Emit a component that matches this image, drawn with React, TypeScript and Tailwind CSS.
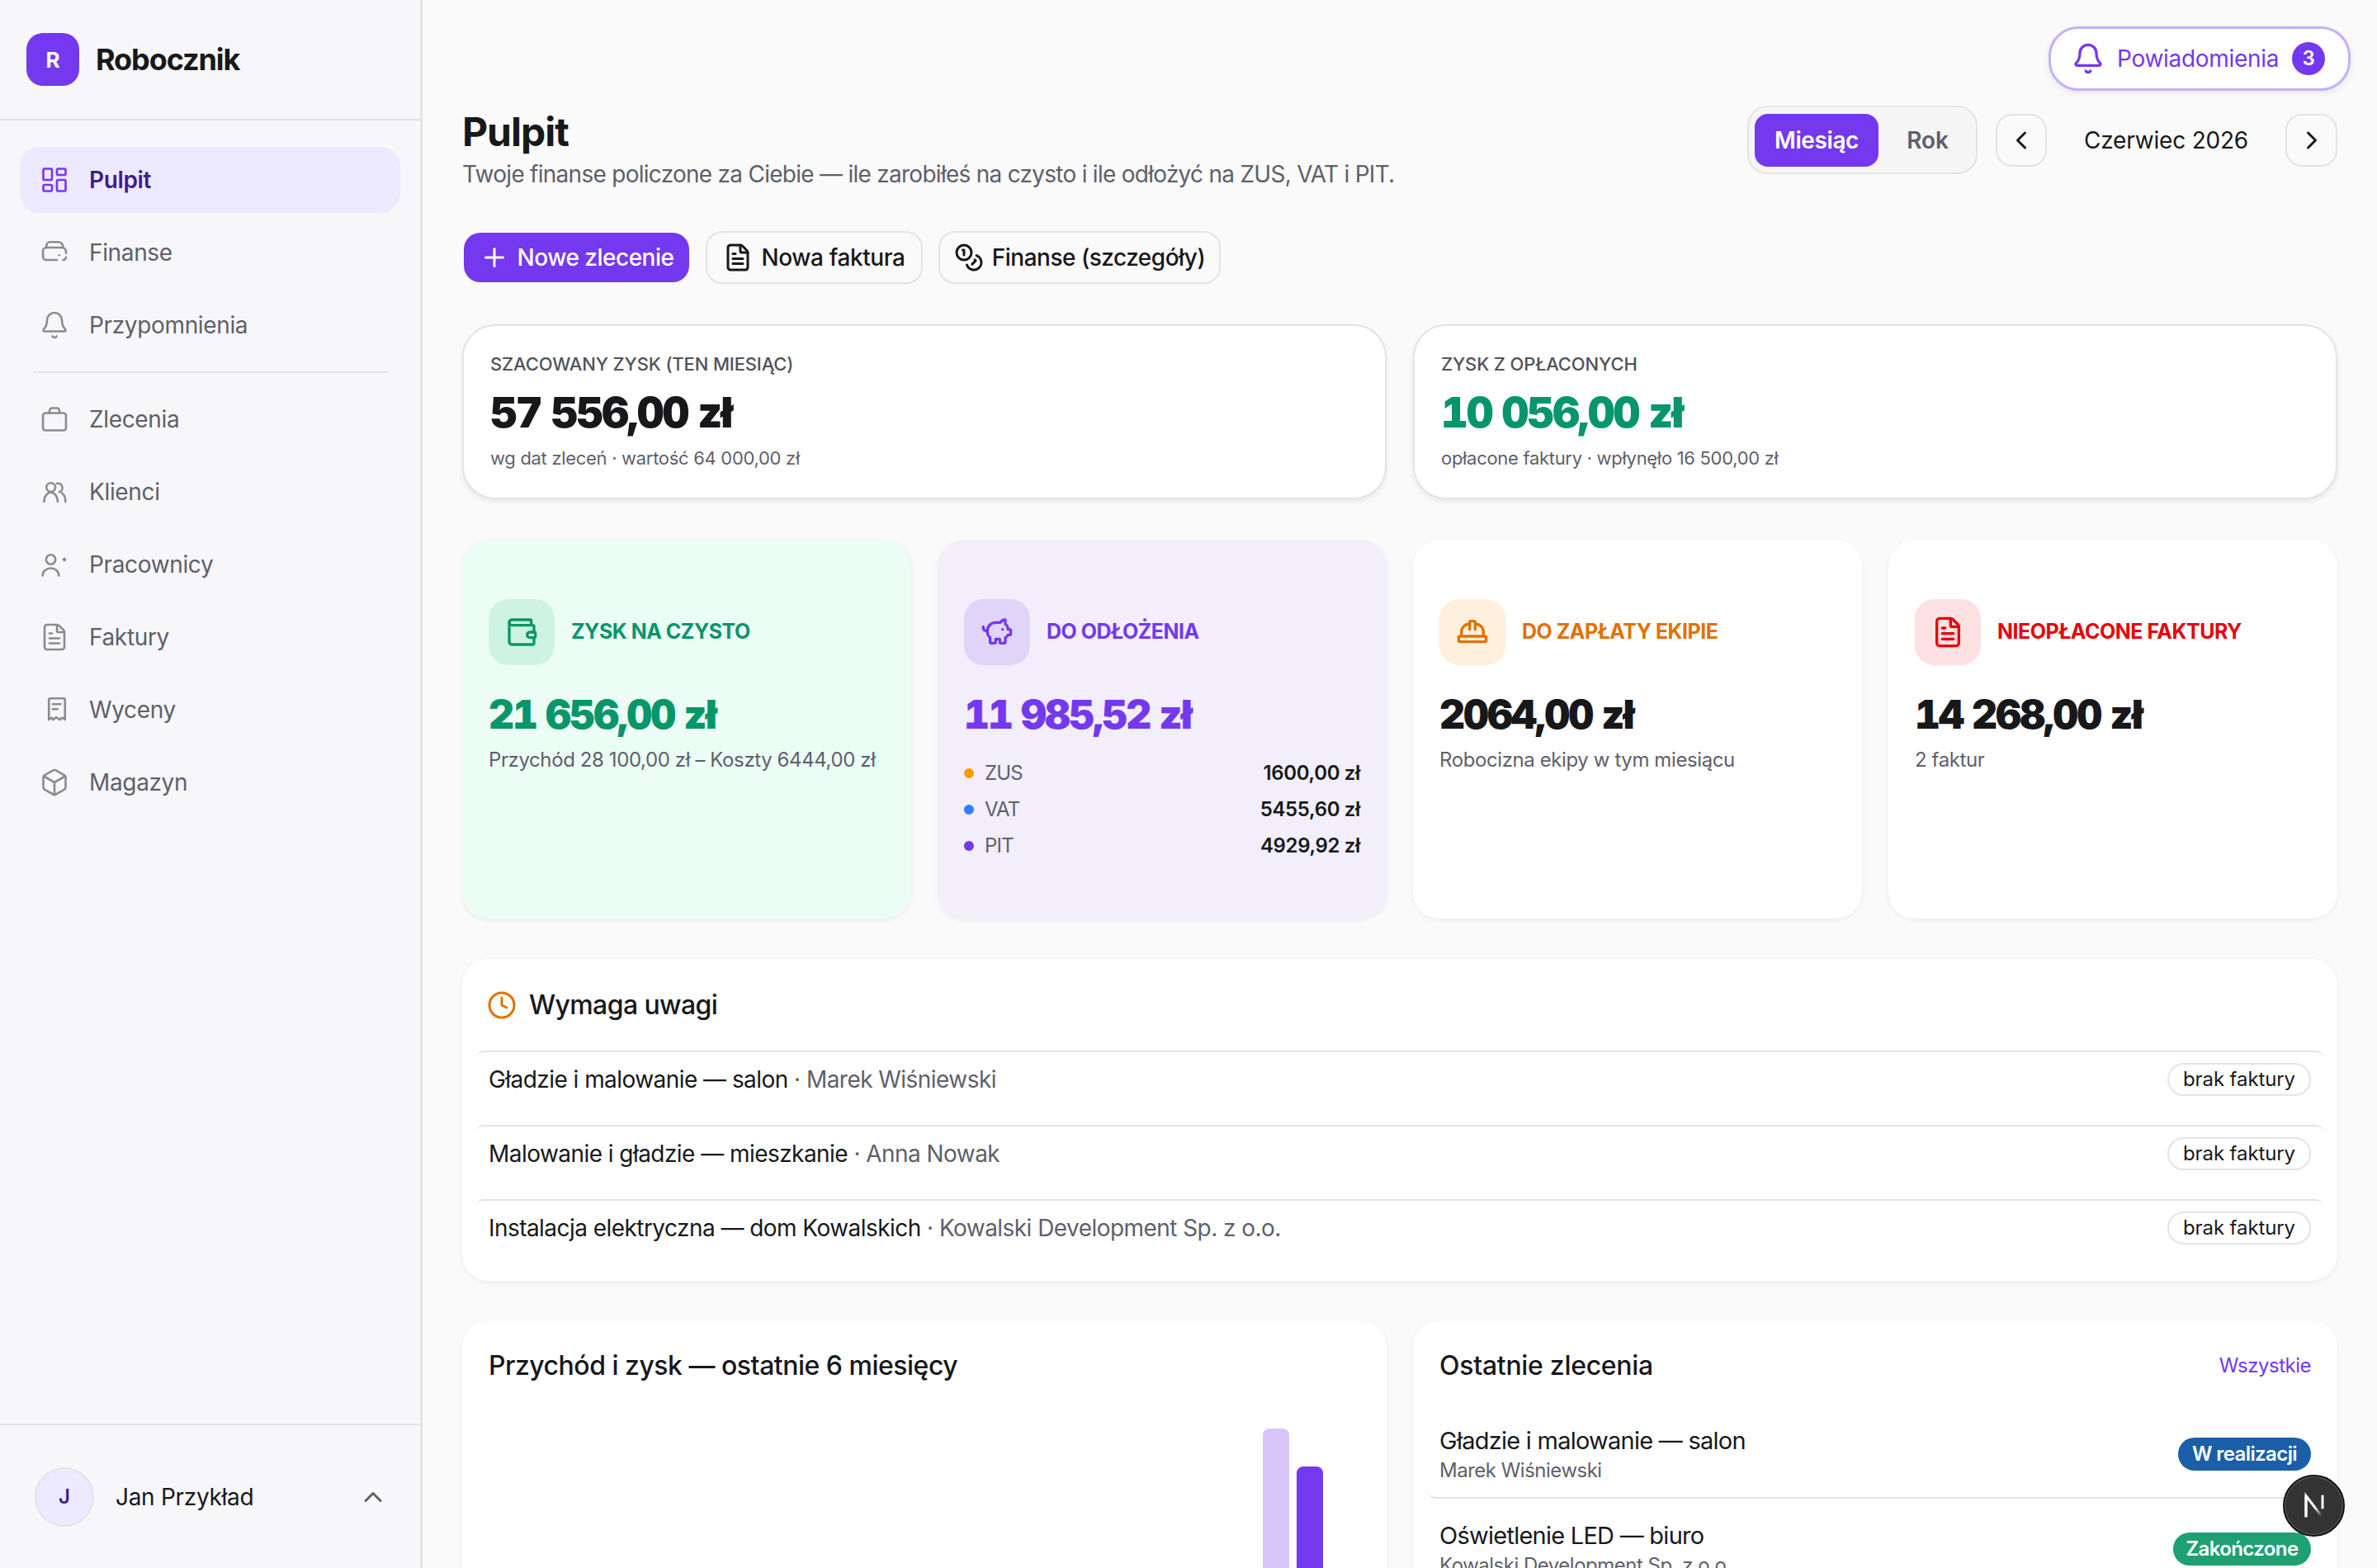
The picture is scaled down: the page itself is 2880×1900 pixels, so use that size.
import {
  LayoutDashboard,
  Bell,
  FileText,
  Box,
  ChevronUp,
  ChevronLeft,
  ChevronRight,
  Plus,
  Coins,
  Wallet,
  PiggyBank,
  HardHat,
  Clock,
} from "lucide-react";

type IconProps = { className?: string; strokeWidth?: number };

const FinanseIcon = ({ className, strokeWidth = 2 }: IconProps) => (
  <svg viewBox="0 0 24 24" fill="none" stroke="currentColor" strokeWidth={strokeWidth} strokeLinecap="round" strokeLinejoin="round" className={className}>
    <path d="M5.500 8V6.500a3 3 0 0 1 3-3h6.500a4 4 0 0 1 4 4" />
    <path d="M21.300 12.500v-1a3.500 3.500 0 0 0-3.500-3.500H5.500a2.800 2.800 0 0 0-2.800 2.800v4.400A2.800 2.800 0 0 0 5.500 18H14" />
    <path d="M21.300 15.800a2.200 2.200 0 0 1-2.200 2.200" />
    <path d="M15.800 14.200h.01" />
  </svg>
);

const ZlecenieIcon = ({ className, strokeWidth = 2 }: IconProps) => (
  <svg viewBox="0 0 24 24" fill="none" stroke="currentColor" strokeWidth={strokeWidth} strokeLinecap="round" strokeLinejoin="round" className={className}>
    <rect x="2.700" y="7" width="18.600" height="14" rx="2" />
    <path d="M8 7V5a2 2 0 0 1 2-2h4a2 2 0 0 1 2 2v2" />
  </svg>
);

const KlienciIcon = ({ className, strokeWidth = 2 }: IconProps) => (
  <svg viewBox="0 0 24 24" fill="none" stroke="currentColor" strokeWidth={strokeWidth} strokeLinecap="round" strokeLinejoin="round" className={className}>
    <circle cx="9.100" cy="8.400" r="3.600" />
    <path d="M3.600 20c0-4.500 2.500-7.500 5.500-7.500s5.500 3 5.500 7.500" />
    <path d="M14 5.300a3.500 3.500 0 0 1 1.800 6.800" />
    <path d="M18 13c1.800 1.300 2.900 3.800 2.900 7" />
  </svg>
);

const PracownikIcon = ({ className, strokeWidth = 2 }: IconProps) => (
  <svg viewBox="0 0 24 24" fill="none" stroke="currentColor" strokeWidth={strokeWidth} strokeLinecap="round" strokeLinejoin="round" className={className}>
    <circle cx="9" cy="8" r="3.800" />
    <path d="M2.500 21v-.5a6.500 5.500 0 0 1 13 0v.5" />
    <path d="M19.200 8h1.600M20 7.200v1.600" />
  </svg>
);

const WycenaIcon = ({ className, strokeWidth = 2 }: IconProps) => (
  <svg viewBox="0 0 24 24" fill="none" stroke="currentColor" strokeWidth={strokeWidth} strokeLinecap="round" strokeLinejoin="round" className={className}>
    <path d="M7.500 20V4a1.200 1.200 0 0 1 1.200-1.200h10.600A1.200 1.200 0 0 1 20.500 4v16l-2-1.500-2.500 1.500-2.500-2-2.500 2-1.500-1.500z" />
    <path d="M10.500 7.500h6.500M10.500 11.500h4" />
  </svg>
);

const nav1 = [
  { label: "Pulpit", icon: LayoutDashboard, active: true },
  { label: "Finanse", icon: FinanseIcon },
  { label: "Przypomnienia", icon: Bell },
];

const nav2 = [
  { label: "Zlecenia", icon: ZlecenieIcon },
  { label: "Klienci", icon: KlienciIcon },
  { label: "Pracownicy", icon: PracownikIcon },
  { label: "Faktury", icon: FileText },
  { label: "Wyceny", icon: WycenaIcon },
  { label: "Magazyn", icon: Box },
];

const attention = [
  { title: "Gładzie i malowanie — salon", who: "Marek Wiśniewski" },
  { title: "Malowanie i gładzie — mieszkanie", who: "Anna Nowak" },
  { title: "Instalacja elektryczna — dom Kowalskich", who: "Kowalski Development Sp. z o.o." },
];

function NavItem({ item }: { item: any }) {
  const Icon = item.icon;
  return (
    <div
      className={`flex h-20 items-center gap-6 rounded-[24px] pl-6 text-[28px] ${
        item.active ? "bg-[#ede9fe] font-semibold text-[#3f1d8a]" : "text-[#5f5f6b]"
      }`}
    >
      <Icon strokeWidth={1.75} className={`size-9 shrink-0 ${item.active ? "text-[#7438ee]" : "text-[#8b8b94]"}`} />
      <span className="tracking-[-0.35px]">{item.label}</span>
    </div>
  );
}

function Kpi({
  bg,
  iconBg,
  icon: Icon,
  color,
  label,
  value,
  valueColor,
  children,
}: {
  bg: string;
  iconBg: string;
  icon: any;
  color: string;
  label: string;
  value: string;
  valueColor: string;
  children: React.ReactNode;
}) {
  return (
    <div className={`h-[459px] rounded-[32px] px-8 pt-[72px] shadow-[0_2px_6px_rgba(0,0,0,0.06)] ${bg}`}>
      <div className="flex items-center gap-5">
        <div className={`flex size-20 items-center justify-center rounded-[24px] ${iconBg}`}>
          <Icon className={`size-10 ${color}`} />
        </div>
        <div className={`text-[25px] font-bold uppercase tracking-[-0.5px] ${color}`}>{label}</div>
      </div>
      <div className={`mt-[30px] text-[48px] font-black leading-[60px] tracking-[-1.9px] tabular-nums ${valueColor}`}>{value}</div>
      {children}
    </div>
  );
}

export default function App() {
  return (
    <div className="relative flex h-[1900px] overflow-hidden bg-[#fafafa] text-[#18181b] [font-family:Inter,sans-serif]">
      {/* Sidebar */}
      <aside className="flex h-full w-[512px] shrink-0 flex-col border-r-[3px] border-[#e4e4e7] bg-[#f7f7fa]">
        <div className="flex h-[146px] items-center gap-5 border-b-2 border-[#e4e4e7] pl-8">
          <div className="flex size-16 items-center justify-center rounded-[20px] bg-[#7438ee] text-[26px] font-bold text-white">R</div>
          <span className="text-[36px] font-bold tracking-[-1.1px]">Robocznik</span>
        </div>
        <nav className="flex flex-1 flex-col px-6 pt-8">
          <div className="flex flex-col gap-2">
            {nav1.map((n) => (
              <NavItem key={n.label} item={n} />
            ))}
          </div>
          <div className="mx-4 mb-[16px] mt-[16px] h-0.5 bg-[#e4e4e7]" />
          <div className="flex flex-col gap-2">
            {nav2.map((n) => (
              <NavItem key={n.label} item={n} />
            ))}
          </div>
        </nav>
        <div className="flex h-[175px] items-center border-t-2 border-[#e4e4e7] pl-[42px] pr-[39px]">
          <div className="flex size-[72px] items-center justify-center rounded-full border-2 border-[#e4e4e7] bg-[#ede9fe] text-[24px] font-semibold text-[#3f1d8a]">J</div>
          <span className="ml-[26px] text-[28px] tracking-[-0.3px]">Jan Przykład</span>
          <ChevronUp className="ml-auto size-9 text-[#5f5f6b]" />
        </div>
      </aside>

      {/* Main */}
      <main className="flex-1 px-12 pt-[128px]">
        <div className="flex items-start justify-between">
          <div className="pt-1">
            <h1 className="text-[48px] font-bold leading-[56px] tracking-[-1px]">Pulpit</h1>
            <p className="mt-[5px] text-[28px] leading-[36px] tracking-[-0.73px] text-[#5f5f6b]">
              Twoje finanse policzone za Ciebie — ile zarobiłeś na czysto i ile odłożyć na ZUS, VAT i PIT.
            </p>
          </div>
          <div className="flex items-center">
            <div className="flex h-[83px] w-[279px] items-center rounded-[24px] border-2 border-[#e4e4e7] bg-[#f5f5f6] px-[7px]">
              <div className="flex h-16 w-[150px] items-center justify-center rounded-[16px] bg-[#7438ee] text-[28px] font-semibold tracking-[-0.4px] text-white">Miesiąc</div>
              <div className="flex-1 pl-2 text-center text-[28px] font-semibold tracking-[-0.2px] text-[#5f5f6b]">Rok</div>
            </div>
            <div className="ml-[22px] flex h-16 w-[62px] items-center justify-center rounded-[20px] border-2 border-[#e4e4e7]">
              <ChevronLeft className="size-9" />
            </div>
            <div className="w-[289px] text-center text-[28px] tracking-[-0.2px]">Czerwiec 2026</div>
            <div className="flex h-16 w-[63px] items-center justify-center rounded-[20px] border-2 border-[#e4e4e7]">
              <ChevronRight className="size-9" />
            </div>
          </div>
        </div>

        {/* Actions */}
        <div className="ml-0.5 mt-[51px] flex items-center gap-5">
          <button className="flex h-[60px] w-[273px] items-center justify-center gap-[10px] rounded-[20px] bg-[#7438ee] text-[28px] font-medium tracking-[-0.5px] text-white">
            <Plus className="size-9" />
            Nowe zlecenie
          </button>
          <button className="flex h-16 w-[263px] items-center justify-center gap-[10px] rounded-[20px] border-2 border-[#e4e4e7] text-[28px] font-medium tracking-[-0.4px]">
            <FileText className="size-9" />
            Nowa faktura
          </button>
          <button className="-ml-px flex h-16 w-[342px] items-center justify-center gap-[10px] rounded-[20px] border-2 border-[#e4e4e7] text-[28px] font-medium tracking-[-0.5px]">
            <Coins className="size-9" />
            Finanse (szczegóły)
          </button>
        </div>

        {/* Summary */}
        <div className="mt-[49px] grid grid-cols-2 gap-8">
          <div className="h-[212px] rounded-[40px] border-2 border-[#e4e4e7] bg-white px-8 pt-[30px] shadow-[0_3px_6px_rgba(0,0,0,0.08)]">
            <div className="text-[22px] font-medium uppercase leading-8 tracking-[-0.15px] text-[#52525b]">Szacowany zysk (ten miesiąc)</div>
            <div className="mt-[13px] text-[51px] font-black leading-[60px] tracking-[-2px] tabular-nums">57 556,00 zł</div>
            <div className="mt-[9px] text-[22px] leading-8 tracking-[-0.3px] text-[#5f5f6b]">wg dat zleceń · wartość 64 000,00 zł</div>
          </div>
          <div className="h-[212px] rounded-[40px] border-2 border-[#e4e4e7] bg-white px-8 pt-[30px] shadow-[0_3px_6px_rgba(0,0,0,0.08)]">
            <div className="text-[22px] font-medium uppercase leading-8 tracking-[-0.15px] text-[#52525b]">Zysk z opłaconych</div>
            <div className="mt-[13px] text-[51px] font-black leading-[60px] tracking-[-2px] tabular-nums text-[#079669]">10 056,00 zł</div>
            <div className="mt-[9px] text-[22px] leading-8 tracking-[-0.3px] text-[#5f5f6b]">opłacone faktury · wpłynęło 16 500,00 zł</div>
          </div>
        </div>

        {/* KPI */}
        <div className="mt-[49px] grid grid-cols-4 gap-8">
          <Kpi bg="bg-[#ecfdf5]" iconBg="bg-[#cdf4e3]" icon={Wallet} color="text-[#079669]" label="Zysk na czysto" value="21 656,00 zł" valueColor="text-[#079669]">
            <div className="mt-[9px] text-[24px] leading-8 tracking-[-0.4px] text-[#5f5f6b]">Przychód 28 100,00 zł – Koszty 6444,00 zł</div>
          </Kpi>
          <Kpi bg="bg-[#f2eefb]" iconBg="bg-[#e0d4f8]" icon={PiggyBank} color="text-[#7438ee]" label="Do odłożenia" value="11 985,52 zł" valueColor="text-[#7438ee]">
            <div className="mt-[25px] flex flex-col gap-3 text-[24px] leading-8">
              {[
                ["ZUS", "1600,00 zł", "bg-[#ff9900]"],
                ["VAT", "5455,60 zł", "bg-[#2f80ff]"],
                ["PIT", "4929,92 zł", "bg-[#7438ee]"],
              ].map(([k, v, c]) => (
                <div key={k} className="flex items-center">
                  <span className={`size-3 rounded-full ${c}`} />
                  <span className="ml-[13px] text-[#5f5f6b] tracking-[-0.8px]">{k}</span>
                  <span className="ml-auto font-semibold tracking-[-0.35px]">{v}</span>
                </div>
              ))}
            </div>
          </Kpi>
          <Kpi bg="bg-white" iconBg="bg-[#fef0dc]" icon={HardHat} color="text-[#e27100]" label="Do zapłaty ekipie" value="2064,00 zł" valueColor="text-[#18181b]">
            <div className="mt-[9px] text-[24px] leading-8 tracking-[-0.4px] text-[#5f5f6b]">Robocizna ekipy w tym miesiącu</div>
          </Kpi>
          <Kpi bg="bg-white" iconBg="bg-[#fde0e2]" icon={FileText} color="text-[#e7000b]" label="Nieopłacone faktury" value="14 268,00 zł" valueColor="text-[#18181b]">
            <div className="mt-[9px] text-[24px] leading-8 tracking-[-0.4px] text-[#5f5f6b]">2 faktur</div>
          </Kpi>
        </div>

        {/* Attention */}
        <div className="mt-[49px] h-[390px] rounded-[32px] bg-white px-4 shadow-[0_2px_6px_rgba(0,0,0,0.06)]">
          <div className="flex h-[111px] items-center gap-[15px] pl-[14px] text-[32px] font-medium tracking-[-0.6px]">
            <Clock className="size-9 text-[#e27100]" />
            Wymaga uwagi
          </div>
          {attention.map((a) => (
            <div key={a.title} className="flex h-[90px] items-center justify-between rounded-t-[10px] border-t-2 border-[#e4e4e7] pb-[36px] pl-4 pr-4 pt-[13px]">
              <div className="text-[28px] tracking-[-0.55px]">
                {a.title} <span className="text-[#5f5f6b]">· {a.who}</span>
              </div>
              <div className="flex h-[40px] w-[174px] items-center justify-center rounded-full border-2 border-[#e4e4e7] text-[24px] tracking-[-0.1px]">brak faktury</div>
            </div>
          ))}
        </div>

        {/* Bottom */}
        <div className="mt-[48px] grid grid-cols-2 gap-8">
          <div className="h-[420px] rounded-[32px] bg-white px-8 pt-[35px] shadow-[0_2px_6px_rgba(0,0,0,0.06)]">
            <div className="text-[32px] font-medium leading-10 tracking-[-0.5px]">Przychód i zysk — ostatnie 6 miesięcy</div>
            <div className="mt-[56px] flex h-[300px] items-end justify-end gap-[9px] pr-[45px]">
              <div className="h-[300px] w-8 rounded-t-[8px] bg-[#d8c5fa]" />
              <div className="h-[254px] w-8 rounded-t-[8px] bg-[#7438ee]" />
            </div>
          </div>
          <div className="h-[420px] rounded-[32px] bg-white px-4 pt-[35px] shadow-[0_2px_6px_rgba(0,0,0,0.06)]">
            <div className="flex items-center justify-between px-4">
              <div className="text-[32px] font-medium leading-10 tracking-[-0.3px]">Ostatnie zlecenia</div>
              <div className="text-[24px] tracking-[-0.5px] text-[#7438ee]">Wszystkie</div>
            </div>
            <div className="mt-[26px] flex items-center justify-between rounded-b-[12px] border-b-2 border-[#e4e4e7] px-4 pb-4 pt-[25px]">
              <div>
                <div className="text-[29px] leading-10 tracking-[-0.75px]">Gładzie i malowanie — salon</div>
                <div className="text-[24px] leading-8 tracking-[-0.5px] text-[#5f5f6b]">Marek Wiśniewski</div>
              </div>
              <div className="flex h-10 w-[161px] items-center justify-center rounded-full bg-[#1a5fa8] text-[24px] font-semibold tracking-[-0.6px] text-white">W realizacji</div>
            </div>
            <div className="flex items-center justify-between px-4 pt-[25px]">
              <div>
                <div className="text-[29px] leading-10 tracking-[-0.75px]">Oświetlenie LED — biuro</div>
                <div className="text-[24px] leading-8 tracking-[-0.5px] text-[#5f5f6b]">Kowalski Development Sp. z o.o.</div>
              </div>
              <div className="flex h-10 w-[167px] items-center justify-center rounded-full bg-[#1fa073] text-[24px] font-semibold tracking-[-0.6px] text-white">Zakończone</div>
            </div>
          </div>
        </div>
      </main>

      {/* Powiadomienia overlay */}
      <div className="absolute right-8 top-8 flex h-[78px] w-[366px] items-center rounded-[36px] border-[3px] border-[#c4b0fa] bg-white pl-[25px] shadow-[0_3px_8px_rgba(0,0,0,0.08)]">
        <Bell className="size-10 text-[#7438ee]" />
        <span className="ml-[15px] text-[28px] tracking-[-0.3px] text-[#7438ee]">Powiadomienia</span>
        <span className="ml-[16px] flex size-10 items-center justify-center rounded-full bg-[#7438ee] text-[24px] font-semibold text-white">3</span>
      </div>

      {/* Dev indicator */}
      <div className="absolute left-[2766px] top-[1787px] flex size-[75px] items-center justify-center rounded-full border-2 border-[#111] bg-[#333] shadow-[0_0_0_1px_#666_inset]">
        <svg viewBox="0 0 24 24" className="size-10" fill="none">
          <defs>
            <linearGradient id="nfade" x1="0" y1="0" x2="0.7" y2="1">
              <stop offset="0.55" stopColor="white" />
              <stop offset="1" stopColor="white" stopOpacity="0" />
            </linearGradient>
          </defs>
          <path d="M6 20V4.500l13 17" stroke="url(#nfade)" strokeWidth="1.800" />
          <path d="M6 20V4.500" stroke="white" strokeWidth="1.800" />
          <path d="M18 4v10" stroke="white" strokeWidth="1.800" />
        </svg>
      </div>
    </div>
  );
}
